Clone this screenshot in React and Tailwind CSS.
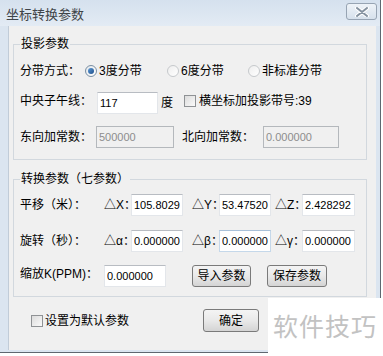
import React from "react";

const font = "font-['Liberation_Sans','Noto_Sans_CJK_SC',sans-serif]";

// Win7 style text box
const Field = ({ value, className, disabled, hover }) => (
  <input
    readOnly
    defaultValue={value}
    className={`h-[22px] border pl-[2px] pr-0 text-[11px] outline-none ${font} ${
      disabled
        ? "bg-[#f0f0f0] text-[#8d8d8d] border-[#b4b8bc]"
        : hover
        ? "bg-white text-black border-[#c5d8ea] border-t-[#a9c1d9]"
        : "bg-white text-black border-[#e3e6ea] border-t-[#b8bcc2]"
    } ${className}`}
  />
);

const Radio = ({ checked }) => (
  <span
    className={`w-[12px] h-[12px] rounded-full border flex items-center justify-center shrink-0 ${
      checked
        ? "border-[#7a8fa3] bg-gradient-to-br from-[#e4e8ec] to-white"
        : "border-[#c6c9cc] bg-gradient-to-br from-[#eeeeee] to-white"
    }`}
  >
    {checked && (
      <span className="w-[6px] h-[6px] rounded-full bg-gradient-to-br from-[#5d9ad6] to-[#1f4f8a]" />
    )}
  </span>
);

const Check = () => (
  <span className="w-[12px] h-[12px] border border-[#8f9295] bg-gradient-to-br from-[#dcdcdc] to-[#fafafa] shrink-0" />
);

const Btn = ({ children, className }) => (
  <button
    className={`h-[22px] rounded-[3px] border border-[#7a7a7a] bg-gradient-to-b from-[#f4f4f4] via-[#e9e9e9] to-[#d4d4d4] text-[12px] text-black leading-none ${font} ${className}`}
  >
    {children}
  </button>
);

const Group = ({ title, children, className }) => (
  <div className={`relative border border-[#d2d8de] ${className}`}>
    <span className="absolute -top-[8px] left-[6px] px-[1px] bg-[#f0f0f0] text-[12px] leading-[14px] text-black">
      {title}
    </span>
    {children}
  </div>
);

export default function App() {
  return (
    <div className={`w-[383px] h-[356px] bg-white relative overflow-hidden text-[12px] text-black ${font}`}>
      <div className="w-[381px] h-[353px] bg-[#dbe5f0] border-r border-b border-[#5f6770] flex flex-col">
        {/* title bar */}
        <div className="h-[26px] flex items-center justify-between pl-[6px] pr-[3px] bg-gradient-to-b from-[#d5e1ee] to-[#e3ebf4]">
          <span className="text-[13px] text-[#3f4448] leading-none mt-[2px]">坐标转换参数</span>
          <span className="w-[31px] h-[17px] mb-[3px] rounded-[3px] border border-[#97a4b3] bg-gradient-to-b from-[#eef3f8] to-[#d7e1ec] flex items-center justify-center">
            <svg width="14" height="10" viewBox="0 0 14 10">
              <path d="M2 1 L12 9 M12 1 L2 9" stroke="#ffffff" strokeWidth="4" strokeLinecap="round" />
              <path d="M2 1 L12 9 M12 1 L2 9" stroke="#8592a0" strokeWidth="2" strokeLinecap="round" />
            </svg>
          </span>
        </div>

        {/* client area */}
        <div className="ml-[8px] w-[368px] h-[324px] bg-[#f0f0f0] border-l border-[#c1ccd8] flex flex-col">
          <Group title="投影参数" className="mt-[18px] ml-[4px] w-[354px] h-[116px] pt-[17px] pl-[6px]">
            <div className="flex items-center h-[18px]">
              <span className="w-[65px]">分带方式：</span>
              <span className="w-[82px] flex items-center gap-[2px]">
                <Radio checked />
                <span>3度分带</span>
              </span>
              <span className="w-[81px] flex items-center gap-[2px]">
                <Radio />
                <span>6度分带</span>
              </span>
              <span className="flex items-center gap-[2px]">
                <Radio />
                <span>非标准分带</span>
              </span>
            </div>
            <div className="flex items-center h-[22px] mt-[12px]">
              <span className="w-[77px] -mt-[5px]">中央子午线：</span>
              <Field value="117" className="w-[61px]" />
              <span className="ml-[3px]">度</span>
              <span className="ml-[11px] -mt-[5px] flex items-center gap-[3px]">
                <Check />
                <span>横坐标加投影带号:39</span>
              </span>
            </div>
            <div className="flex items-center h-[22px] mt-[12px]">
              <span className="w-[76px]">东向加常数：</span>
              <Field value="500000" disabled className="w-[78px]" />
              <span className="ml-[8px] w-[81px]">北向加常数：</span>
              <Field value="0.000000" disabled className="w-[76px]" />
            </div>
          </Group>

          <Group title="转换参数（七参数）" className="mt-[19px] ml-[4px] w-[354px] h-[118px] pt-[14px] pl-[6px]">
            <div className="flex items-center h-[22px]">
              <span className="w-[84px]">平移（米）：</span>
              <span className="w-[27px]">△X：</span>
              <Field value="105.8029" className="w-[52px]" />
              <span className="ml-[9px] w-[27px]">△Y：</span>
              <Field value="53.47520" className="w-[52px]" />
              <span className="ml-[4px] w-[27px]">△Z：</span>
              <Field value="2.428292" className="w-[53px]" />
            </div>
            <div className="flex items-center h-[22px] mt-[14px]">
              <span className="w-[84px]">旋转（秒）：</span>
              <span className="w-[27px]">△α：</span>
              <Field value="0.000000" className="w-[52px]" />
              <span className="ml-[9px] w-[27px]">△β：</span>
              <Field value="0.000000" hover className="w-[52px]" />
              <span className="ml-[4px] w-[27px]">△γ：</span>
              <Field value="0.000000" className="w-[53px]" />
            </div>
            <div className="flex items-center h-[22px] mt-[13px]">
              <span className="w-[84px] -mt-[4px]">缩放K(PPM)：</span>
              <Field value="0.000000" className="w-[62px]" />
              <Btn className="ml-[26px] w-[59px]">导入参数</Btn>
              <Btn className="ml-[16px] w-[60px]">保存参数</Btn>
            </div>
          </Group>

          <div className="flex items-center h-[23px] mt-[12px] pl-[22px]">
            <span className="w-[172px] flex items-center gap-[2px]">
              <Check />
              <span>设置为默认参数</span>
            </span>
            <Btn className="w-[56px] h-[23px]">确定</Btn>
          </div>
        </div>
      </div>

      {/* watermark overlay */}
      <div className="absolute left-[268px] top-[298px] w-[115px] h-[58px] bg-white flex items-center pl-[5px]">
        <span className="text-[25px] text-[#c2c2c2] leading-none tracking-[1px]">软件技巧</span>
      </div>
    </div>
  );
}
